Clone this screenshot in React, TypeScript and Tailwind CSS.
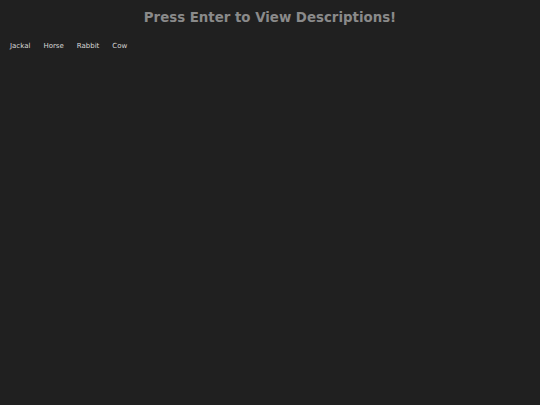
export default function App() {
  const animals = ['Jackal', 'Horse', 'Rabbit', 'Cow'];
  return (
    <div className="min-h-[405px] w-full bg-[#202020] font-['DejaVu_Sans',sans-serif]">
      {/* Heading */}
      <h1 className="pt-[8px] text-center text-[13.35px] font-bold leading-[19px] text-[#8a8a8a]">
        Press Enter to View Descriptions!
      </h1>
      {/* Animal list */}
      <ul className="mt-[14px] flex gap-[13px] px-[10px] text-[7px] text-[#d8d8d8]">
        {animals.map((a) => (
          <li key={a}>{a}</li>
        ))}
      </ul>
    </div>
  );
}
